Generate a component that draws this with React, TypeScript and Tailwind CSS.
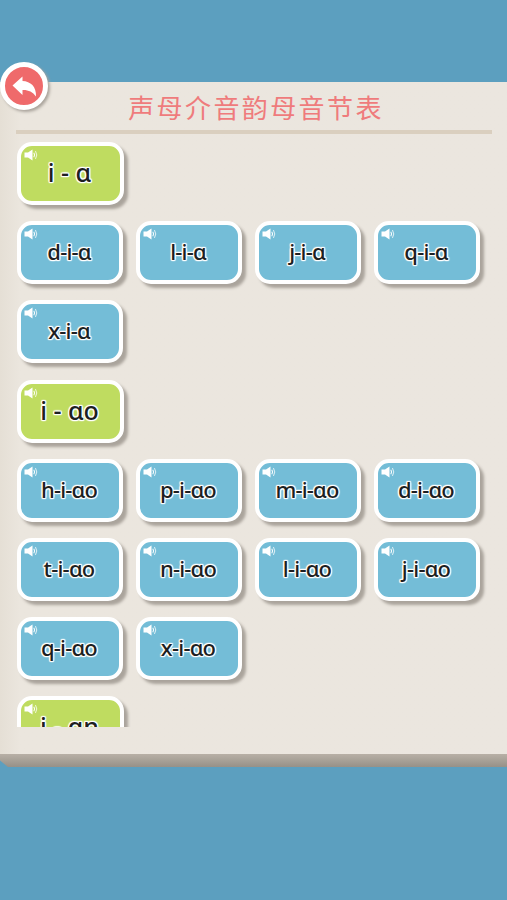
type CardProps = { label: string; green?: boolean };

const halo =
  "[text-shadow:1px_0_1px_#fff,-1px_0_1px_#fff,0_1px_1px_#fff,0_-1px_1px_#fff,1px_1px_1px_#fff,-1px_-1px_1px_#fff,1px_-1px_1px_#fff,-1px_1px_1px_#fff]";

const rows: { green?: boolean; items: string[] }[] = [
  { green: true, items: ["i - ɑ"] },
  { items: ["d-i-ɑ", "l-i-ɑ", "j-i-ɑ", "q-i-ɑ"] },
  { items: ["x-i-ɑ"] },
  { green: true, items: ["i - ɑo"] },
  { items: ["h-i-ɑo", "p-i-ɑo", "m-i-ɑo", "d-i-ɑo"] },
  { items: ["t-i-ɑo", "n-i-ɑo", "l-i-ɑo", "j-i-ɑo"] },
  { items: ["q-i-ɑo", "x-i-ɑo"] },
  { green: true, items: ["i - ɑn"] },
];

function Speaker() {
  return (
    <svg viewBox="0 0 14 12" className="h-3 w-3.5" fill="none" stroke="#fff" strokeLinecap="round">
      <path d="M0.500 3.500h3.500L8.500 0.500v11L4 8.500h-3.500z" fill="#fff" stroke="none" />
      <path d="M10 4.200q1.200 1.800 0 3.600" strokeWidth="1.100" />
      <path d="M11.700 2.400q2.400 3.600 0 7.200" strokeWidth="1" opacity="0.8" />
    </svg>
  );
}

function Card({ label, green }: CardProps) {
  return (
    <button
      className={`relative flex h-[63px] shrink-0 items-center justify-center rounded-[15px] border-4 border-white shadow-[4px_4px_3px_#aaa49c] ${
        green ? "w-[107px] bg-[#bfdc60]" : "w-[106px] bg-[#74bdd7]"
      }`}
    >
      <span className="absolute top-[3px] left-[3px]">
        <Speaker />
      </span>
      <span
        className={`whitespace-pre font-['Noto_Sans',sans-serif] leading-none font-medium text-[#1d1f22] ${halo} ${
          green ? "pr-0.5 pb-0.5 text-[25px]" : "pr-0.5 pb-[3px] text-[22px] tracking-[-0.8px]"
        }`}
      >
        {label}
      </span>
    </button>
  );
}

export default function App() {
  return (
    <div className="flex h-[900px] w-[507px] flex-col overflow-hidden bg-[#5c9fbf] pt-[82px]">
      <main className="relative h-[672px] bg-linear-to-r from-[#e5dfd5] via-[#ebe6de] via-4% to-[#ebe6df]">
        <button className="absolute -top-5 left-0 flex size-12 items-center justify-center rounded-full border-[5px] border-white bg-[#ef6a6b] shadow-[2px_2px_3px_#aaa49c]">
          <svg viewBox="0 0 25 21" className="h-[21px] w-[25px] shrink-0" fill="#fff">
            <path d="M0.500 9.500L10.500 0.500V5C18.500 5.300 24.500 10.500 24 20.500C20.500 15.800 16.500 13.800 10.500 14V19z" />
          </svg>
        </button>
        <header className="mx-4 flex h-[52px] w-[476px] items-center justify-center border-b-4 border-[#dacfbf]">
          <h1 className="pt-0.5 pl-1 font-['Noto_Sans_CJK_SC',sans-serif] text-[26px] leading-none font-normal tracking-[2.4px] whitespace-nowrap text-[#ef7b7c]">
            声母介音韵母音节表
          </h1>
        </header>
        <section className="mt-2 ml-[13px] flex h-[585px] flex-col gap-[16.2px] overflow-hidden pl-1">
          {rows.map((row, i) => (
            <div key={i} className="flex shrink-0 gap-[13px]">
              {row.items.map((label) => (
                <Card key={label} label={label} green={row.green} />
              ))}
            </div>
          ))}
        </section>
      </main>
      <div className="h-[13px] shrink-0 bg-linear-to-b from-[#b8b0a6] to-[#969188] [clip-path:polygon(0_0,100%_0,100%_100%,8px_100%,0_50%)]" />
    </div>
  );
}
